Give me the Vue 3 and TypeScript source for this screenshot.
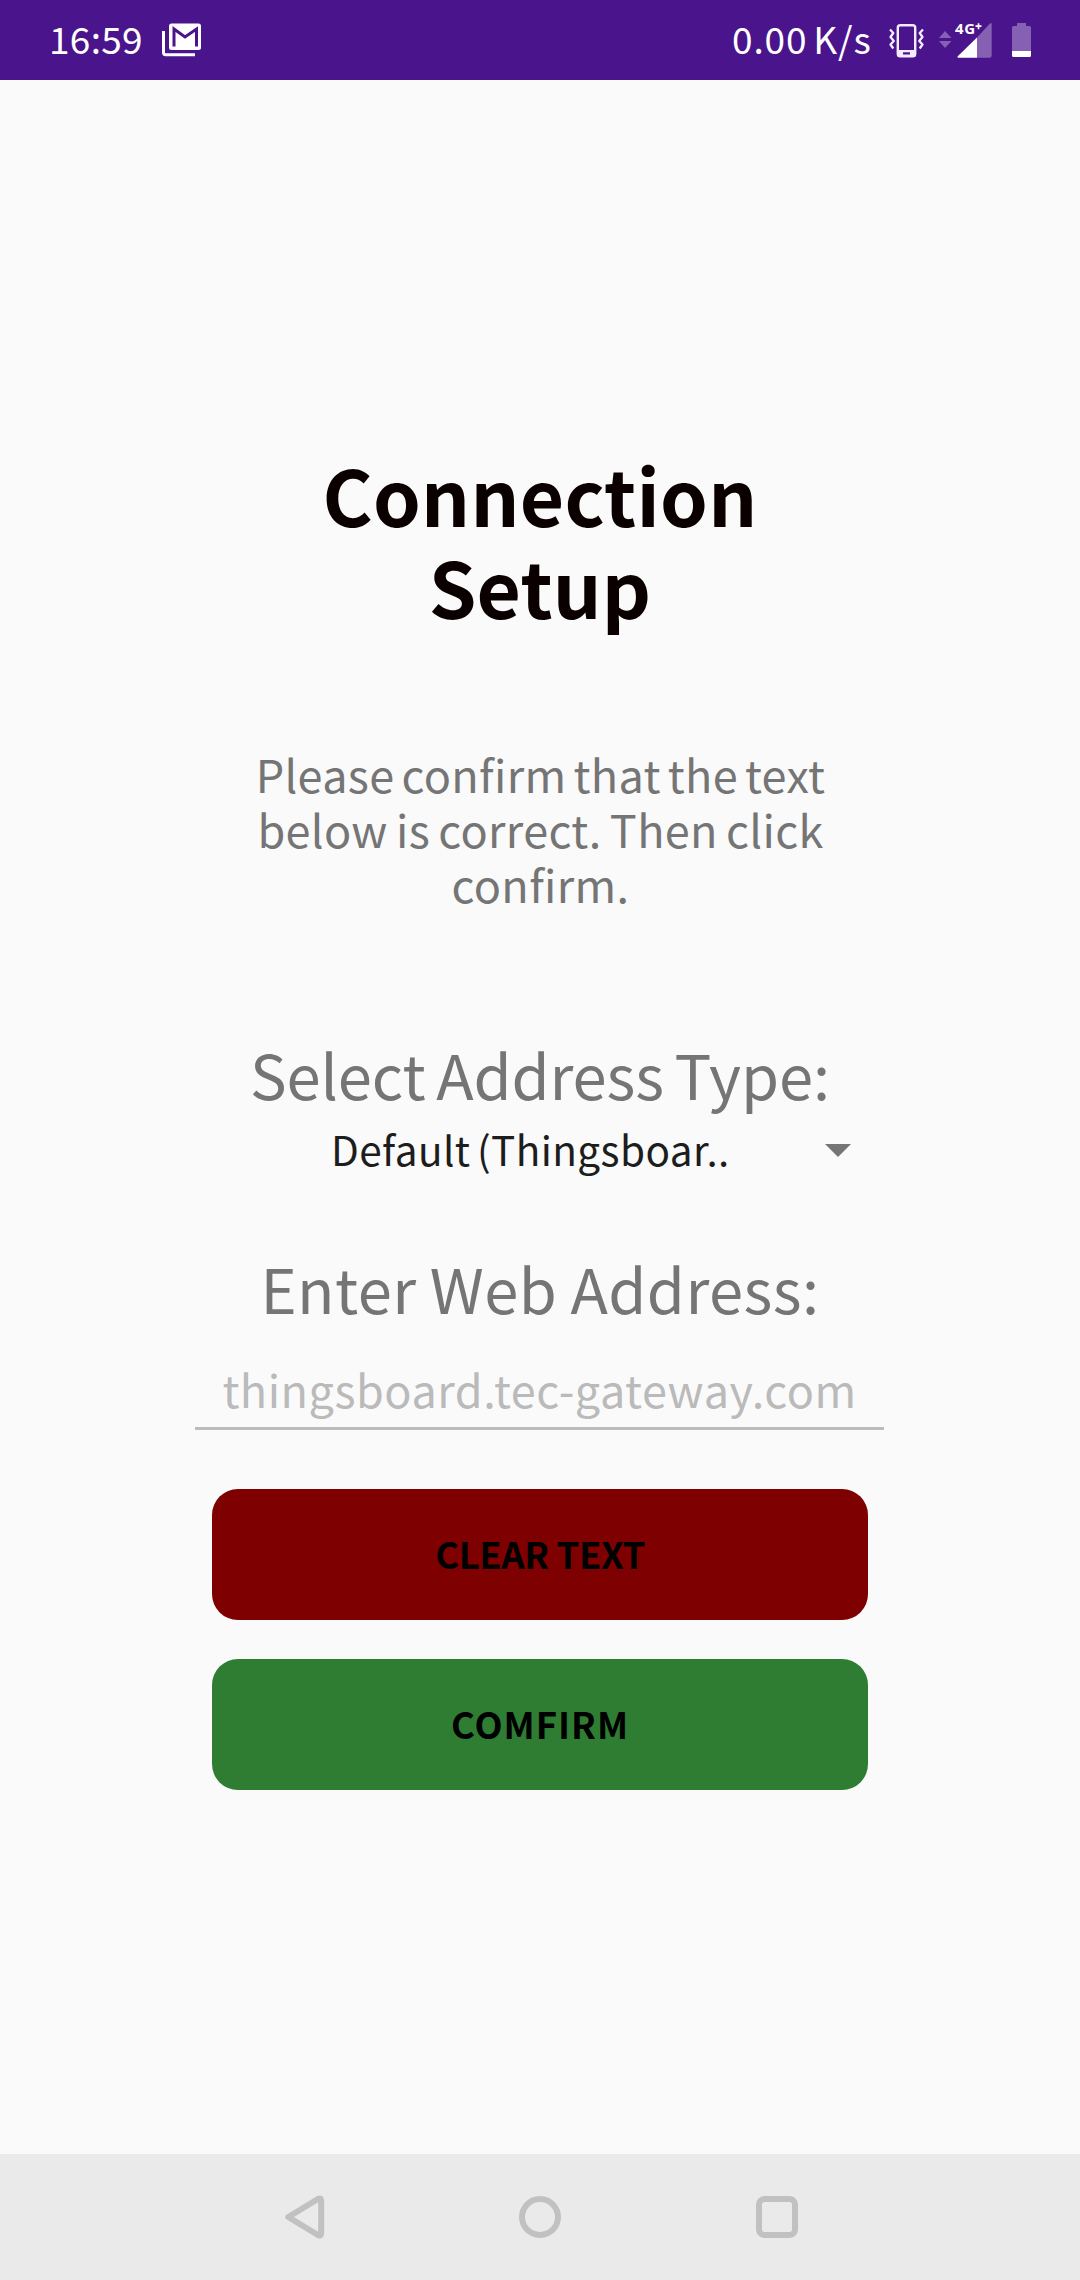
<script setup lang="ts">
const title: string[] = ['Connection', 'Setup']
const message: string[] = ['Please confirm that the text', 'below is correct. Then click', 'confirm.']
</script>

<template>
  <div class="screen">
    <header class="status">
      <span class="clock">16:59</span>
      <svg class="mail" width="42" height="38" viewBox="161 21 42 38">
        <path d="M163.500 31V52.500Q163.500 54.700 165.700 54.700H195" fill="none" stroke="#fff" stroke-width="3" />
        <rect x="169" y="23.500" width="32" height="26.500" rx="2.500" fill="#fff" />
        <path d="M174 46.500V29L185 37L196.500 29V46.500" fill="none" stroke="#4a148c" stroke-width="3" />
      </svg>
      <span class="speed">0.00 K/s</span>
      <svg class="vibrate" width="40" height="38" viewBox="887 21 40 38">
        <rect x="897.800" y="25.200" width="17.400" height="31" rx="2.500" fill="none" stroke="#f3ecff" stroke-width="2.400" />
        <path d="M897 50H916V55Q916 57 914 57H899Q897 57 897 55Z" fill="#f3ecff" />
        <rect x="903" y="52.300" width="7" height="2.200" fill="#4a148c" />
        <path d="M890 29.500L893.300 33L890.500 37L893.800 41L890.500 44.500L893.300 48.500M923 29.500L919.700 33L922.500 37L919.200 41L922.500 44.500L919.700 48.500" fill="none" stroke="#f3ecff" stroke-width="2.300" stroke-linejoin="round" />
      </svg>
      <svg class="signal" width="56" height="40" viewBox="937 20 56 40">
        <path d="M939 38L945 31L951.500 38ZM939 41L945 48L951.500 41Z" fill="#8660b2" />
        <path d="M991.700 24V55.500Q991.700 57.700 989.500 57.700H977V37.500L989.500 24Q991.700 22 991.700 24Z" fill="#8660b2" />
        <path d="M977 37.500V57.700H958.500Q956.500 57.700 958 56Z" fill="#fff" />
        <text x="955" y="34" class="net" textLength="20">4G</text>
        <path d="M975.500 26.200H981.500M978.500 23.200V29.200" stroke="#fff" stroke-width="1.700" />
      </svg>
      <svg class="battery" width="24" height="38" viewBox="1010 21 24 38">
        <path d="M1017 23H1026V26H1029.500Q1031 26 1031 27.500V51H1012V27.500Q1012 26 1013.500 26H1017Z" fill="#8660b2" />
        <path d="M1012 51H1031V55.500Q1031 57 1029.500 57H1013.500Q1012 57 1012 55.500Z" fill="#fff" />
      </svg>
    </header>

    <main class="content">
      <h1 class="title">
        <span v-for="line in title" :key="line" class="line">{{ line }}</span>
      </h1>
      <p class="message">
        <span v-for="line in message" :key="line" class="line">{{ line }}</span>
      </p>
      <h2 class="label type">Select Address Type:</h2>
      <div class="spinner">
        <span>Default (Thingsboar..</span>
        <svg width="26" height="13" viewBox="0 0 26 13"><path d="M0 0H26L13 13Z" fill="#757575" /></svg>
      </div>
      <h2 class="label web">Enter Web Address:</h2>
      <div class="field">thingsboard.tec-gateway.com</div>
      <button class="btn clear">CLEAR TEXT</button>
      <button class="btn confirm">COMFIRM</button>
    </main>

    <nav class="nav">
      <svg width="540" height="50" viewBox="270 2192 540 50" fill="none" stroke="#c1c1c1" stroke-width="6" stroke-linejoin="round">
        <path d="M288.300 2217L318.300 2198.800Q321.200 2197.500 321.200 2201V2233Q321.200 2236.500 318.300 2235.200L288.300 2217Z" />
        <circle cx="540" cy="2217" r="18" />
        <rect x="759" y="2199" width="36" height="36" rx="5.500" />
      </svg>
    </nav>
  </div>
</template>

<style>
body { margin: 0; background: #fafafa; }
</style>

<style scoped>
.screen {
  width: 1080px;
  height: 2280px;
  display: flex;
  flex-direction: column;
  background: #fafafa;
  font-family: "Noto Sans CJK SC", "Noto Sans", sans-serif;
  font-variant-ligatures: none;
  overflow: hidden;
}
.status {
  box-sizing: border-box;
  height: 80px;
  flex: none;
  display: flex;
  align-items: center;
  padding-left: 49px;
  background: #4a148c;
  color: #fff;
  font-size: 37px;
  line-height: 76px;
  white-space: nowrap;
}
.clock { width: 112px; padding-bottom: 4px; letter-spacing: 0.28px; }
.mail { flex: none; }
.speed { margin-left: 529px; width: 155px; padding-bottom: 4px; letter-spacing: 0.9px; word-spacing: -3.500px; }
.vibrate { flex: none; }
.signal { flex: none; margin-left: 10px; overflow: visible; }
.battery { flex: none; margin-left: 17px; }
.net { font: 700 15px "Noto Sans", sans-serif; fill: #fff; }
.content {
  flex: 1;
  display: flex;
  flex-direction: column;
  align-items: center;
  padding-top: 368px;
  white-space: nowrap;
}
.line { display: block; }
.title {
  margin: 0;
  text-align: center;
  font-size: 76.5px;
  line-height: 92px;
  font-weight: 700;
  letter-spacing: 0.25px;
  color: #0a0000;
}
.message {
  margin: 114px 0 0 1px;
  text-align: center;
  font-size: 45px;
  line-height: 55px;
  letter-spacing: 0.33px;
  word-spacing: -2.200px;
  color: #757575;
}
.message .line:first-child { word-spacing: -3.400px; }
.label {
  margin: 0;
  font-size: 61.5px;
  line-height: 80px;
  font-weight: 400;
  color: #757575;
}
.type { margin-top: 123px; letter-spacing: -0.1px; word-spacing: -3px; }
.spinner {
  box-sizing: border-box;
  width: 656px;
  height: 50px;
  margin-top: 10px;
  padding: 0 17px 0 119px;
  display: flex;
  align-items: center;
  justify-content: space-between;
  font-size: 40.5px;
  line-height: 50px;
  letter-spacing: 0.4px;
  word-spacing: -3px;
  color: #1d1d1d;
}
.spinner svg { margin-top: 2px; }
.web { margin-top: 74px; letter-spacing: 0.45px; word-spacing: -1px; }
.field {
  width: 689px;
  margin: 34px 1px 0 0;
  padding-bottom: 11px;
  border-bottom: 3px solid #bcbcbc;
  text-align: center;
  font-size: 45px;
  line-height: 54px;
  letter-spacing: 0.52px;
  color: #bababa;
}
.btn {
  width: 656px;
  height: 131px;
  padding: 0 0 3px;
  border: 0;
  border-radius: 26px;
  font: 700 36.5px "Noto Sans CJK SC", "Noto Sans", sans-serif;
  color: #000;
}
.clear { margin-top: 59px; background: #7f0000; letter-spacing: -0.45px; }
.confirm { margin-top: 39px; background: #2e7d32; letter-spacing: 1px; }
.nav {
  height: 126px;
  flex: none;
  display: flex;
  align-items: center;
  justify-content: center;
  background: #eaeaea;
}
</style>
